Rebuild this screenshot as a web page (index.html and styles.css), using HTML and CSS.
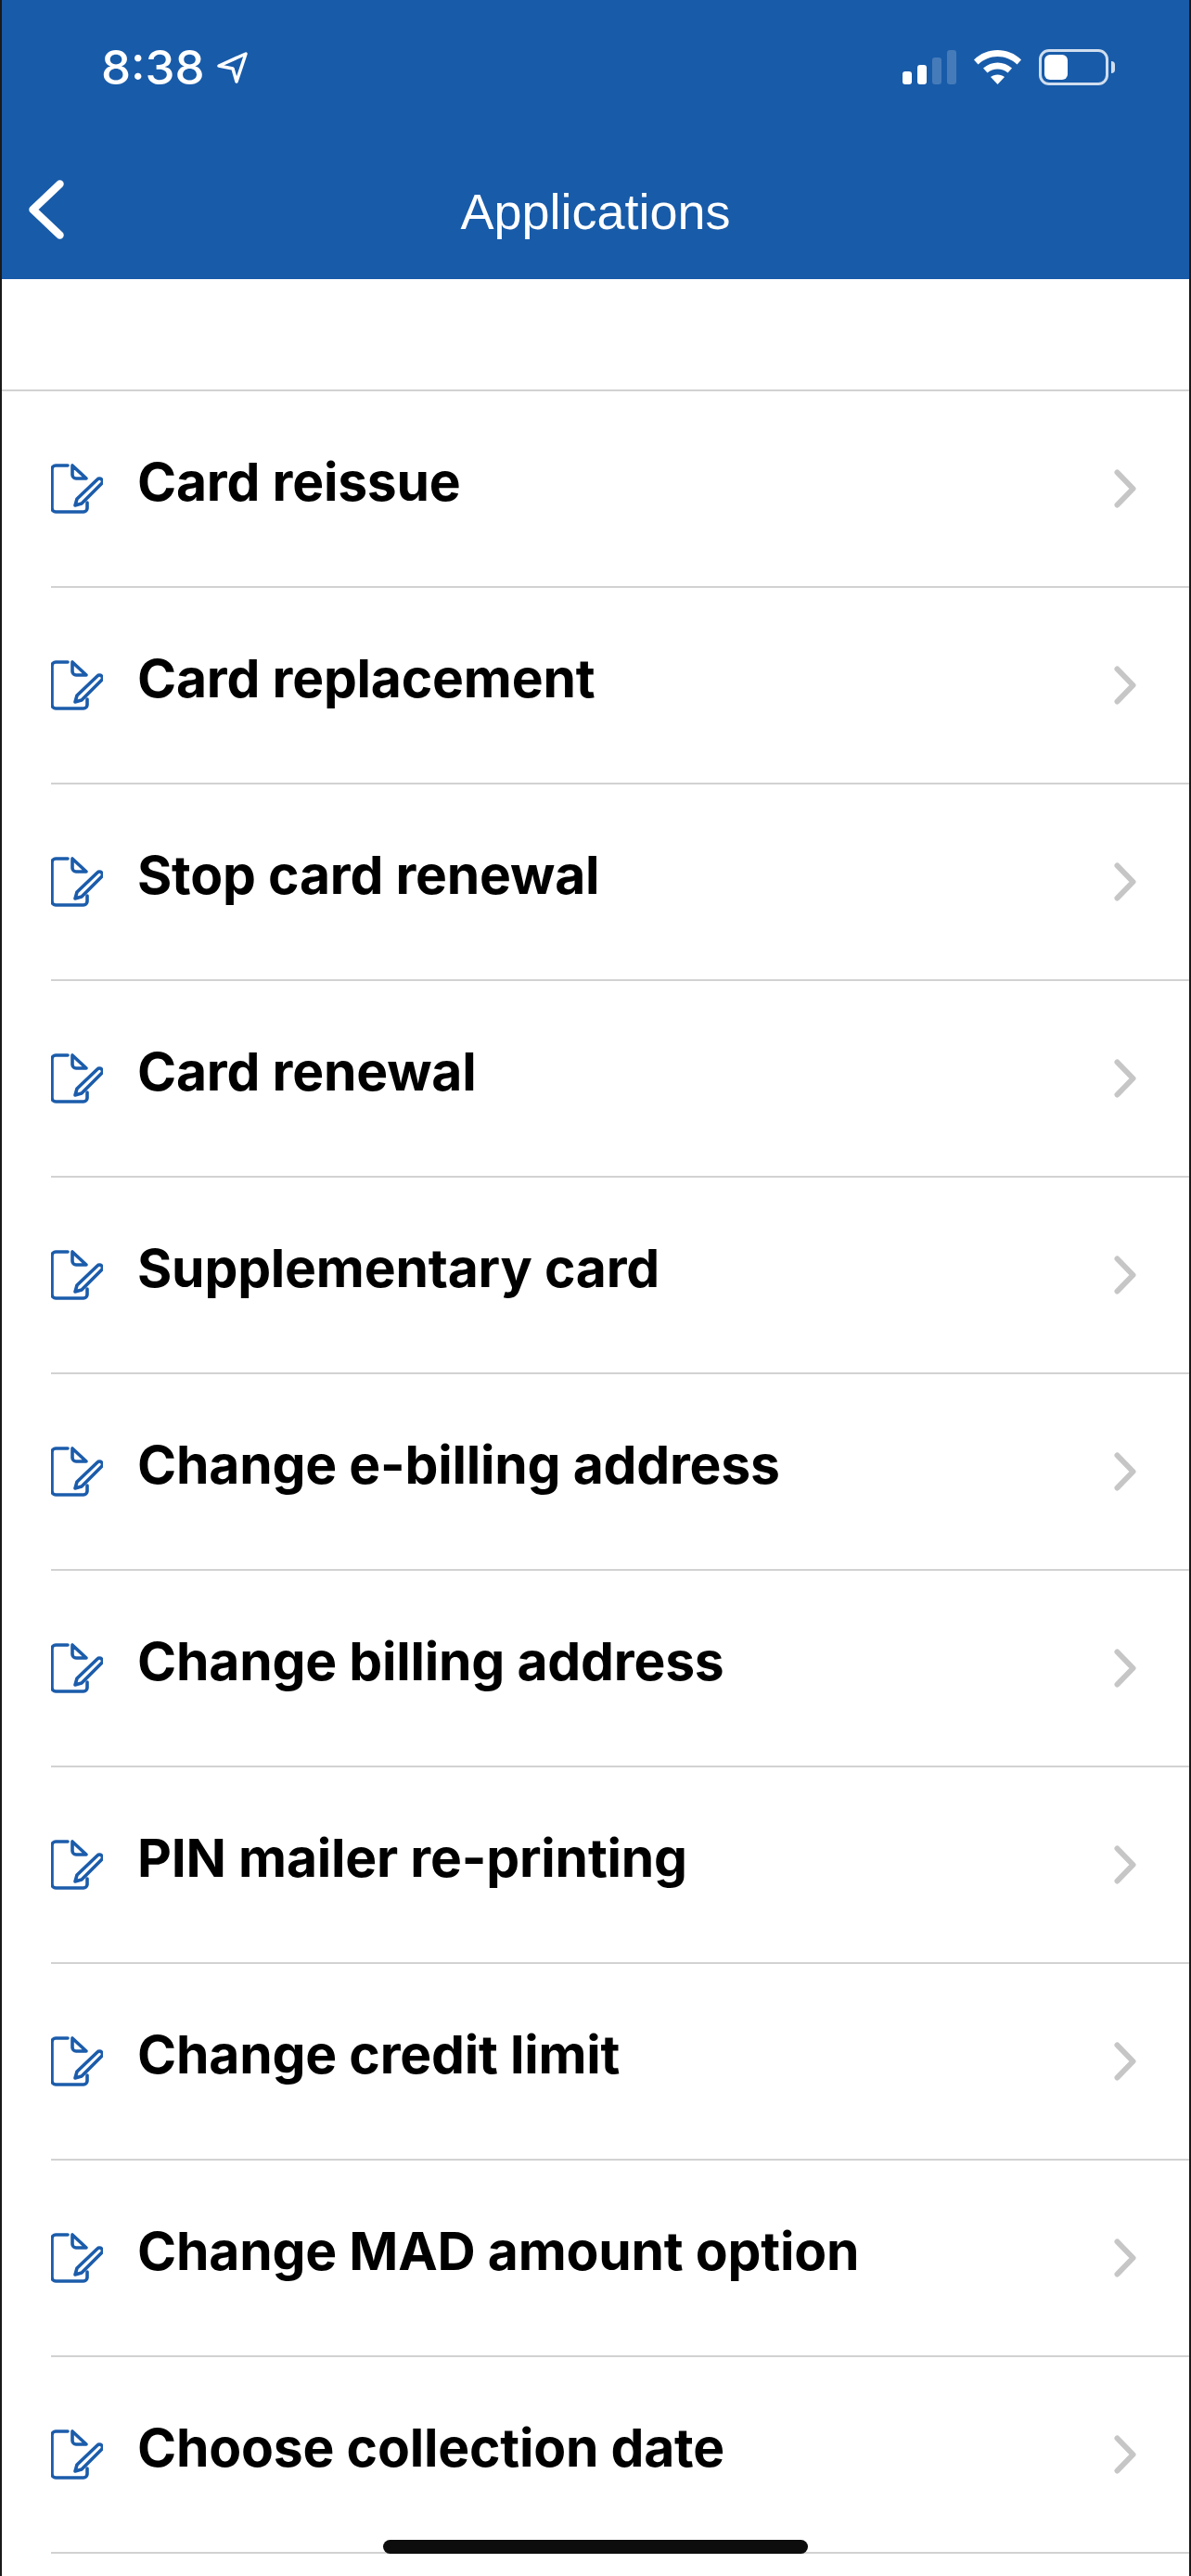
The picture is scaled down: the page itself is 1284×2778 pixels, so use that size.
FILE: index.html
```html
<!DOCTYPE html>
<html lang="en">
<head>
    <meta charset="UTF-8">
    <meta name="viewport" content="width=device-width, initial-scale=1.0">
    <title>Applications</title>
    <link rel="stylesheet" href="styles.css">
</head>
<body>
    <svg class="svg-defs" width="0" height="0">
        <symbol id="form-icon" viewBox="26 18 56 56">
            <path d="M44 21H31a4 4 0 0 0-4 4v42a4 4 0 0 0 4 4h30a4 4 0 0 0 4-4v-6" fill="none" stroke="#1b5cab" stroke-width="3.6" stroke-linecap="round" stroke-linejoin="round"/>
            <path d="M49 21v10a4 4 0 0 0 4 4h11z" fill="none" stroke="#1b5cab" stroke-width="3.6" stroke-linejoin="round"/>
            <path d="M52 64l2-7 22-21a3 3 0 0 1 4.500 4.500L59 62z" fill="none" stroke="#1b5cab" stroke-width="3.6" stroke-linejoin="round"/>
        </symbol>
        <symbol id="row-chevron" viewBox="0 0 24 42">
            <path d="M3.500 3.500L20.500 21L3.500 38.500" fill="none" stroke="#c6c6c6" stroke-width="6" stroke-linecap="round" stroke-linejoin="round"/>
        </symbol>
    </svg>

    <div class="screen">
        <header class="top-bar">
            <div class="status-bar">
                <div class="status-left">
                    <span class="clock">8:38</span>
                    <svg class="location" width="33" height="34" viewBox="0 0 33 34">
                        <path d="M2 15L31 2L21 32L17 18z" fill="none" stroke="#fff" stroke-width="3.500" stroke-linejoin="round"/>
                    </svg>
                </div>
                <div class="status-right">
                    <div class="signal">
                        <span class="bar bar-1"></span>
                        <span class="bar bar-2"></span>
                        <span class="bar bar-3 off"></span>
                        <span class="bar bar-4 off"></span>
                    </div>
                    <svg class="wifi" width="51" height="37" viewBox="0 0 51 37">
                        <path d="M25.500 0C35 0 44 3.500 51 10.500L46.500 15.500C40.500 10 33.500 7 25.500 7S10.500 10 4.500 15.500L0 10.500C7 3.500 16 0 25.500 0z" fill="#fff"/>
                        <path d="M25.500 13.500C31 13.500 36.500 15.500 41 19.500L36.500 24.500C33.500 22 29.500 20.500 25.500 20.500S17.500 22 14.500 24.500L10 19.500C14.500 15.500 20 13.500 25.500 13.500z" fill="#fff"/>
                        <path d="M25.500 26.500C28.500 26.500 31 27.500 33 29L25.500 37L18 29C20 27.500 22.500 26.500 25.500 26.500z" fill="#fff"/>
                    </svg>
                    <div class="battery">
                        <div class="battery-body"><span class="battery-fill"></span></div>
                        <span class="battery-nub"></span>
                    </div>
                </div>
            </div>
            <div class="nav-bar">
                <svg class="back" width="38" height="64" viewBox="0 0 38 64">
                    <path d="M33.500 4.500L4.500 32L33.500 59.500" fill="none" stroke="#fff" stroke-width="8.500" stroke-linecap="round" stroke-linejoin="round"/>
                </svg>
                <h1 class="nav-title">Applications</h1>
            </div>
        </header>

        <div class="list-gap"></div>

        <ul class="app-list">
            <li class="app-row">
                <svg class="row-icon"><use href="#form-icon"/></svg>
                <span class="row-label">Card reissue</span>
                <svg class="row-arrow"><use href="#row-chevron"/></svg>
            </li>
            <li class="app-row">
                <svg class="row-icon"><use href="#form-icon"/></svg>
                <span class="row-label">Card replacement</span>
                <svg class="row-arrow"><use href="#row-chevron"/></svg>
            </li>
            <li class="app-row">
                <svg class="row-icon"><use href="#form-icon"/></svg>
                <span class="row-label">Stop card renewal</span>
                <svg class="row-arrow"><use href="#row-chevron"/></svg>
            </li>
            <li class="app-row">
                <svg class="row-icon"><use href="#form-icon"/></svg>
                <span class="row-label">Card renewal</span>
                <svg class="row-arrow"><use href="#row-chevron"/></svg>
            </li>
            <li class="app-row">
                <svg class="row-icon"><use href="#form-icon"/></svg>
                <span class="row-label">Supplementary card</span>
                <svg class="row-arrow"><use href="#row-chevron"/></svg>
            </li>
            <li class="app-row">
                <svg class="row-icon"><use href="#form-icon"/></svg>
                <span class="row-label">Change e-billing address</span>
                <svg class="row-arrow"><use href="#row-chevron"/></svg>
            </li>
            <li class="app-row">
                <svg class="row-icon"><use href="#form-icon"/></svg>
                <span class="row-label">Change billing address</span>
                <svg class="row-arrow"><use href="#row-chevron"/></svg>
            </li>
            <li class="app-row">
                <svg class="row-icon"><use href="#form-icon"/></svg>
                <span class="row-label">PIN mailer re-printing</span>
                <svg class="row-arrow"><use href="#row-chevron"/></svg>
            </li>
            <li class="app-row">
                <svg class="row-icon"><use href="#form-icon"/></svg>
                <span class="row-label">Change credit limit</span>
                <svg class="row-arrow"><use href="#row-chevron"/></svg>
            </li>
            <li class="app-row">
                <svg class="row-icon"><use href="#form-icon"/></svg>
                <span class="row-label">Change MAD amount option</span>
                <svg class="row-arrow"><use href="#row-chevron"/></svg>
            </li>
            <li class="app-row">
                <svg class="row-icon"><use href="#form-icon"/></svg>
                <span class="row-label">Choose collection date</span>
                <svg class="row-arrow"><use href="#row-chevron"/></svg>
            </li>
        </ul>

        <div class="home-indicator"></div>
    </div>
</body>
</html>
```

FILE: styles.css
```css
html, body {
    margin: 0;
    padding: 0;
    background: white;
}
.svg-defs {
    display: block;
    height: 0;
}
.screen {
    position: relative;
    width: 1284px;
    height: 2778px;
    box-sizing: border-box;
    border-left: 2px solid #1a1a1a;
    border-right: 2px solid #1a1a1a;
    overflow: hidden;
    font-family: Inter, "Liberation Sans", sans-serif;
    background-color: white;
}
.top-bar {
    height: 301px;
    background-color: #185ba9;
    color: white;
}
.status-bar {
    height: 146px;
    box-sizing: border-box;
    padding: 53px 80px 0 107px;
    display: flex;
    justify-content: space-between;
    align-items: flex-start;
}
.status-left {
    display: flex;
    align-items: center;
    gap: 13px;
    height: 39px;
}
.clock {
    font-size: 51px;
    font-weight: 500;
    line-height: 39px;
}
.status-right {
    display: flex;
    align-items: flex-start;
    gap: 19px;
}
.signal {
    display: flex;
    align-items: flex-end;
    gap: 6px;
    height: 38px;
}
.bar {
    width: 10px;
    border-radius: 3px;
    background-color: white;
}
.bar.off {
    background-color: rgba(255, 255, 255, 0.2);
}
.bar-1 { height: 14px; }
.bar-2 { height: 21px; }
.bar-3 { height: 29px; }
.bar-4 { height: 37px; }
.wifi {
    margin-top: 1px;
}
.battery {
    display: flex;
    align-items: center;
    gap: 3px;
}
.battery-body {
    width: 75px;
    height: 39px;
    box-sizing: border-box;
    border: 3px solid rgba(255, 255, 255, 0.8);
    border-radius: 11px;
    padding: 3px;
}
.battery-fill {
    display: block;
    width: 25px;
    height: 27px;
    border-radius: 6px;
    background-color: white;
}
.battery-nub {
    width: 4px;
    height: 13px;
    border-radius: 0 6px 6px 0;
    background-color: rgba(255, 255, 255, 0.8);
}
.nav-bar {
    position: relative;
    height: 155px;
    padding-left: 29px;
    display: flex;
    align-items: center;
}
.back {
    margin-top: 5px;
}
.nav-title {
    position: absolute;
    left: 0;
    right: 0;
    top: 47px;
    margin: 0;
    text-align: center;
    font-family: "Liberation Sans", Arial, sans-serif;
    font-size: 54px;
    font-weight: 400;
    line-height: 70px;
}
.list-gap {
    height: 119px;
    border-bottom: 2px solid #d2d2d2;
}
.app-list {
    list-style: none;
    margin: 0;
    padding: 0;
}
.app-row {
    height: 210px;
    margin-left: 53px;
    padding-right: 57px;
    border-bottom: 2px solid #d2d2d2;
    display: flex;
    align-items: center;
}
.row-icon {
    width: 56px;
    height: 56px;
    flex: none;
}
.row-label {
    flex: 1;
    margin-left: 37px;
    margin-bottom: 16px;
    font-size: 57px;
    font-weight: 700;
    letter-spacing: -0.2px;
    color: black;
}
.row-arrow {
    width: 24px;
    height: 42px;
    flex: none;
}
.home-indicator {
    position: absolute;
    left: 411px;
    top: 2739px;
    width: 458px;
    height: 15px;
    border-radius: 8px;
    background-color: #0d0d0d;
}
```
